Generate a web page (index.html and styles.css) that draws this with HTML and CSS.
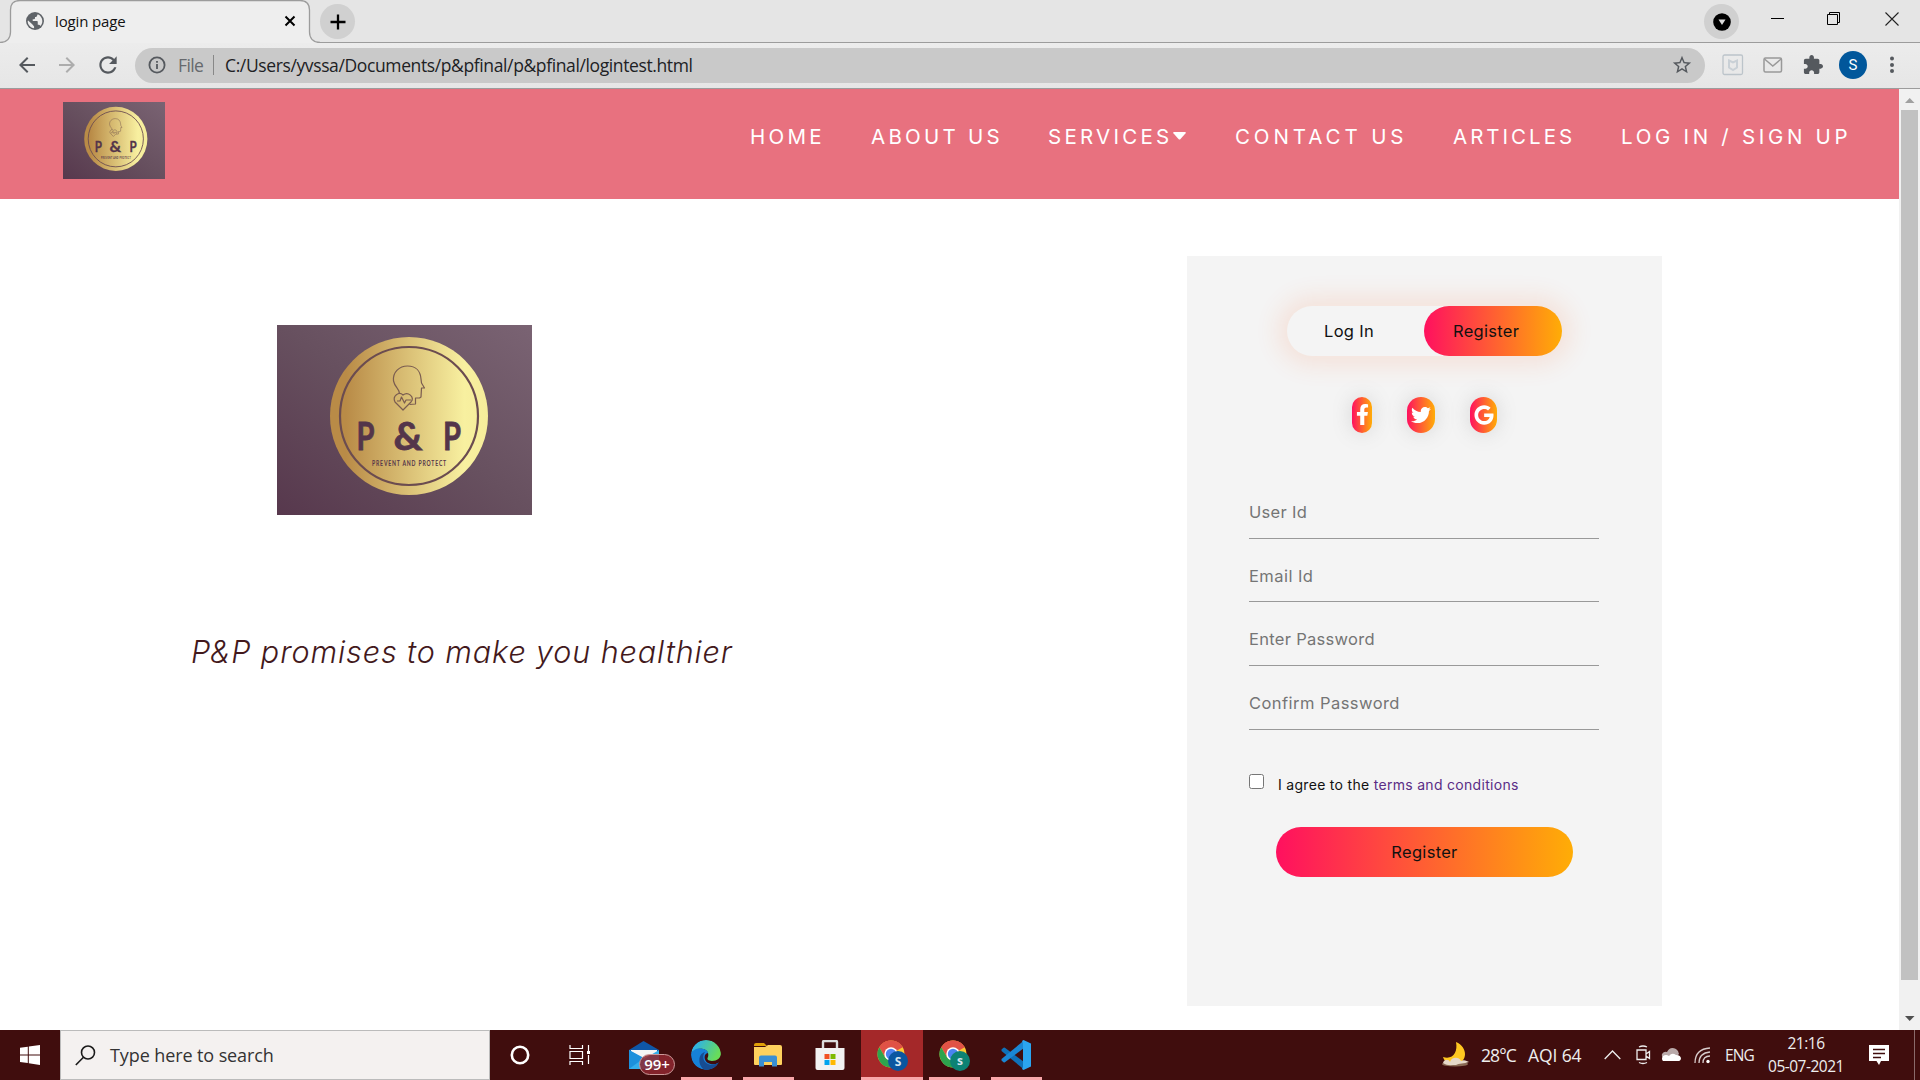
FILE: index.html
```html
<!DOCTYPE html>
<html lang="en">
<head>
<meta charset="utf-8">
<title>login page</title>
<link rel="stylesheet" href="styles.css">
</head>
<body>
<svg class="defs" width="0" height="0">
  <defs>
    <linearGradient id="plum" x1="0" y1="1" x2="1" y2="0"><stop offset="0" stop-color="#57384d"/><stop offset=".5" stop-color="#67505f"/><stop offset="1" stop-color="#7a6373"/></linearGradient>
    <linearGradient id="gold"><stop offset="0" stop-color="#b98b47"/><stop offset=".1" stop-color="#b98b47"/><stop offset=".85" stop-color="#f8f0a0"/><stop offset="1" stop-color="#f5ec9a"/></linearGradient>
    <symbol id="logo" viewBox="0 0 255 190" preserveAspectRatio="none">
      <rect width="255" height="190" fill="url(#plum)"/>
      <circle cx="132" cy="91" r="79" fill="url(#gold)"/>
      <circle cx="132" cy="91" r="69" fill="none" stroke="#6b4c50" stroke-width="2.2"/>
      <g fill="none" stroke="#7a5c50" stroke-width="1.2" stroke-linejoin="round">
        <path d="M122.500 69c.5-5-4.500-6-6-13-1-9 6-15 14-15 9 0 13 6 13.500 13l.5 4 3 5h-3l-.5 9-1.500 1h-4v6l-6 .5"/>
        <path d="M126 85l-8-8c-3-6 4-11 8-7 5-4 12 2 8 7zM120 76h3l1.500-4 3 6 1.500-3h5"/>
      </g>
      <g fill="#54354a" font-family="Lato, sans-serif" text-anchor="middle">
        <g font-size="39" font-weight="700" stroke="#54354a" stroke-width=".8">
          <text x="88.500" y="124.500" textLength="18" lengthAdjust="spacingAndGlyphs">P</text>
          <text x="131" y="124.500" textLength="29" lengthAdjust="spacingAndGlyphs">&amp;</text>
          <text x="175" y="124.500" textLength="18" lengthAdjust="spacingAndGlyphs">P</text>
        </g>
        <text x="132.500" y="140.500" font-size="7.500" font-weight="700" textLength="75" lengthAdjust="spacingAndGlyphs" letter-spacing="1.2">PREVENT AND PROTECT</text>
      </g>
    </symbol>
    <symbol id="chrome" viewBox="0 0 28 28">
      <circle cx="14" cy="14" r="13.500" fill="#fcc934"/>
      <path d="M14 14L2.300 7.250A13.500 13.500 0 0 1 25.700 7.250z" fill="#e05246"/>
      <path d="M14 7.250h11.700A13.500 13.500 0 0 0 2.300 7.250L8.200 17.400z" fill="#e05246"/>
      <path d="M2.300 7.250A13.500 13.500 0 0 0 14 27.500l5.900-10.100L14 20.700 8.200 17.400z" fill="#2da44e"/>
      <circle cx="14" cy="14" r="6.700" fill="#fff"/><circle cx="14" cy="14" r="5.200" fill="#4a84f0"/>
    </symbol>
  </defs>
</svg>

<div class="tabstrip">
  <div class="tab">
    <svg class="tab-shape" width="320" height="43"><path d="M0 42.500C7 42.500 10.500 38 10.500 32V10Q10.500.5 20 .5H300Q309.500.5 309.500 10V32C309.500 38 313 42.500 320 42.500V44H0z" fill="#eee"/><path d="M0 42.500C7 42.500 10.500 38 10.500 32V10Q10.500.5 20 .5H300Q309.500.5 309.500 10V32C309.500 38 313 42.500 320 42.500" fill="none" stroke="#9c9c9c" stroke-width="1.300"/></svg>
    <svg class="globe" width="22" height="22" viewBox="0 0 24 24"><circle cx="12" cy="12" r="9.800" fill="#5f6368"/><path d="M4.500 11.500L9 15.500l2 2.500v1.900C7 19.500 4 16 4 12zM15 4.600C17.900 5.800 20 8.600 20 12c0 2.100-.8 4-2.100 5.400-.8-1.500-1.500-1.400-2.900-1.400v-3c0-.6-.5-1-1-1H9.500v-2H11c.6 0 1-.5 1-1V7.500h1.500z" fill="#eee"/></svg>
    <span class="tab-title">login page</span>
    <svg class="tab-close" width="12" height="12" viewBox="0 0 12 12" stroke="#000" stroke-width="2"><path d="M1.500 1.500l9 9M10.500 1.500l-9 9"/></svg>
  </div>
  <div class="round new-tab"><svg width="16" height="16" stroke="#000" stroke-width="2.300"><path d="M8 .5v15M.5 8h15"/></svg></div>
  <div class="window-controls">
    <div class="round"><svg width="18" height="18"><circle cx="9" cy="9" r="8.800"/><path d="M5.500 6.500h7L9 12z" fill="#ddd"/></svg></div>
    <svg class="wc-min" width="14" height="14" stroke="#000"><path d="M0 6.500h13"/></svg>
    <svg class="wc-max" width="14" height="14" fill="none" stroke="#000"><path d="M.5 2.500h10v10H.5zM2.500 2.500v-2h10v10h-2"/></svg>
    <svg class="wc-close" width="14" height="14" stroke="#222" stroke-width="1.100"><path d="M.5.5l13 13M13.500.5l-13 13"/></svg>
  </div>
</div>

<div class="toolbar">
  <svg class="tool" width="24" height="24" viewBox="0 0 24 24" fill="#55595e"><path d="M20 11H7.830l5.590-5.590L12 4l-8 8 8 8 1.410-1.410L7.830 13H20v-2z"/></svg>
  <svg class="tool" width="24" height="24" viewBox="0 0 24 24" fill="#adadad"><path d="M4 13h12.170l-5.590 5.590L12 20l8-8-8-8-1.410 1.410L16.170 11H4v2z"/></svg>
  <svg class="tool" width="26" height="26" viewBox="0 0 24 24" fill="#55595e"><path d="M17.650 6.350C16.200 4.900 14.210 4 12 4c-4.420 0-7.990 3.580-7.990 8s3.570 8 7.990 8c3.730 0 6.840-2.550 7.730-6h-2.080c-.82 2.330-3.040 4-5.650 4-3.310 0-6-2.690-6-6s2.690-6 6-6c1.660 0 3.140.69 4.220 1.780L13 11h7V4l-2.350 2.350z"/></svg>
  <div class="omnibox">
    <svg width="18" height="18" fill="none" stroke="#55595e" stroke-width="1.800"><circle cx="9" cy="9" r="7.600"/><path d="M9 8v5M9 5v1.800"/></svg>
    <span class="scheme">File</span>
    <span class="divider"></span>
    <span class="url">C:/Users/yvssa/Documents/p&amp;pfinal/p&amp;pfinal/logintest.html</span>
    <svg class="star" width="22" height="22" viewBox="0 0 24 24" fill="#55595e"><path d="M22 9.240l-7.190-.62L12 2 9.190 8.630 2 9.240l5.460 4.730L5.820 21 12 17.270 18.180 21l-1.630-7.030L22 9.240zM12 15.400l-3.760 2.270 1-4.280-3.320-2.880 4.380-.38L12 6.100l1.710 4.040 4.380.38-3.320 2.880 1 4.280L12 15.400z"/></svg>
  </div>
  <div class="extensions">
    <svg width="22" height="22" fill="none"><rect x="1" y="1" width="19.500" height="19.500" rx="1.500" stroke="#bcc4ca" stroke-width="1.300"/><path d="M7 6.500l4 2 4-2v7l-4 2.500-4-2.500z" stroke="#c9d0d6" stroke-width="2"/></svg>
    <svg class="x-mail" width="20" height="16" fill="none" stroke="#999" stroke-width="1.500"><rect x="1" y="1" width="17.500" height="14" rx="1.500"/><path d="M1.500 2l8.300 7 8.300-7"/></svg>
    <svg class="x-puzzle" width="20" height="20" viewBox="1 1 22 22" fill="#55595e"><path d="M20.500 11H19V7c0-1.100-.9-2-2-2h-4V3.500C13 2.120 11.880 1 10.500 1S8 2.120 8 3.500V5H4c-1.100 0-1.990.9-1.990 2v3.800H3.500c1.490 0 2.700 1.210 2.700 2.700s-1.210 2.700-2.700 2.700H2V20c0 1.100.9 2 2 2h3.800v-1.500c0-1.490 1.210-2.700 2.700-2.700 1.490 0 2.700 1.210 2.700 2.700V22H17c1.100 0 2-.9 2-2v-4h1.500c1.380 0 2.500-1.120 2.500-2.500S21.880 11 20.500 11z"/></svg>
    <span class="profile">S</span>
    <svg class="x-menu" width="6" height="18" fill="#55595e"><circle cx="3" cy="2.500" r="2"/><circle cx="3" cy="9" r="2"/><circle cx="3" cy="15" r="2"/></svg>
  </div>
</div>

<div class="viewport">
  <div class="page">
    <header class="site-header">
      <svg class="brand"><use href="#logo"/></svg>
      <nav class="site-nav">
        <a class="n-home">HOME</a>
        <a class="n-about">ABOUT US</a>
        <a class="n-services">SERVICES<svg class="caret" width="13" height="8" fill="#fff"><path d="M1 0h11q1.300.3.600 1.300L7.300 7.200q-.8.700-1.600 0L.4 1.300Q-.3.300 1 0z"/></svg></a>
        <a class="n-contact">CONTACT US</a>
        <a class="n-articles">ARTICLES</a>
        <a class="n-login">LOG IN / SIGN UP</a>
      </nav>
    </header>
    <main class="content">
      <section class="intro">
        <svg class="intro-logo"><use href="#logo"/></svg>
        <p class="slogan">P&amp;P promises to make you healthier</p>
      </section>
      <section class="card">
        <div class="toggle"><span class="toggle-login">Log In</span><span class="toggle-register">Register</span></div>
        <div class="socials">
          <a class="social fb"><svg width="13" height="21" viewBox="0 0 320 512"><path d="M279.140 288l14.220-92.660h-88.910v-60.130c0-25.350 12.420-50.060 52.240-50.060h40.420V6.260S260.430 0 225.360 0c-73.220 0-121.080 44.380-121.080 124.720v70.620H22.890V288h81.390v224h100.170V288z"/></svg></a>
          <a class="social tw"><svg width="20" height="20" viewBox="0 0 512 512"><path d="M459.370 151.716c.325 4.548.325 9.097.325 13.645 0 138.720-105.583 298.558-298.558 298.558-59.452 0-114.680-17.219-161.137-47.106 8.447.974 16.568 1.299 25.340 1.299 49.055 0 94.213-16.568 130.274-44.832-46.132-.975-84.792-31.188-98.112-72.772 6.498.974 12.995 1.624 19.818 1.624 9.421 0 18.843-1.300 27.614-3.573-48.081-9.747-84.143-51.980-84.143-102.985v-1.299c13.969 7.797 30.214 12.670 47.431 13.319-28.264-18.843-46.781-51.005-46.781-87.391 0-19.492 5.197-37.360 14.294-52.954 51.655 63.675 129.300 105.258 216.365 109.807-1.624-7.797-2.599-15.918-2.599-24.040 0-57.828 46.782-104.934 104.934-104.934 30.213 0 57.502 12.670 76.670 33.137 23.715-4.548 46.456-13.320 66.599-25.340-7.798 24.366-24.366 44.833-46.132 57.827 21.117-2.273 41.584-8.122 60.426-16.243-14.292 20.791-32.161 39.308-52.628 54.253z"/></svg></a>
          <a class="social gg"><svg width="20" height="20" viewBox="0 0 488 512"><path d="M488 261.800C488 403.300 391.100 504 248 504 110.800 504 0 393.200 0 256S110.800 8 248 8c66.800 0 123 24.500 166.300 64.900l-67.500 64.900C258.500 52.600 94.300 116.600 94.300 256c0 86.500 69.100 156.600 153.700 156.600 98.200 0 135-70.400 140.800-106.900H248v-85.300h236.100c2.300 12.700 3.900 24.900 3.900 41.400z"/></svg></a>
        </div>
        <div class="fields">
          <div class="field">User Id</div>
          <div class="field f-email">Email Id</div>
          <div class="field">Enter Password</div>
          <div class="field f-confirm">Confirm Password</div>
        </div>
        <div class="agree"><span class="box"></span><span class="agree-text">I agree to the <a>terms and conditions</a></span></div>
        <div class="submit">Register</div>
      </section>
    </main>
  </div>
  <div class="scrollbar">
    <svg width="21" height="21" fill="#a0a0a0"><path d="M6 14h9.500L10.700 9z"/></svg>
    <div class="thumb"></div>
    <svg class="down" width="21" height="21" fill="#505050"><path d="M6 7h9.500l-4.800 5z"/></svg>
  </div>
</div>

<footer class="taskbar">
  <div class="start"><svg width="20" height="20" fill="#fff"><path d="M0 2.800l7.800-1.100v7.700H0zM8.800 1.500L20 0v9.400H8.800zM0 10.400h7.800v7.700L0 17zM8.800 10.400H20V20L8.800 18.300z"/></svg></div>
  <div class="search">
    <svg width="21" height="21" fill="none" stroke="#1a1a1a" stroke-width="1.600"><circle cx="13" cy="7.500" r="6.500"/><path d="M8.500 12.200L.8 20"/></svg>
    <span>Type here to search</span>
  </div>
  <div class="slot narrow"><svg width="20" height="20" fill="none" stroke="#fff" stroke-width="2.600"><circle cx="10" cy="10" r="8.200"/></svg></div>
  <div class="slot narrow"><svg width="22" height="20" fill="none" stroke="#fff" stroke-width="1.200"><path d="M1 0v3.500h12.500V0M1 20v-3.500h12.500V20M1 6.500h12.500v7H1zM19.500 0v6M19.500 10v9"/><path d="M18 6h3v3h-3z" fill="#fff" stroke="none"/></svg></div>
  <div class="slot mail">
    <svg width="32" height="30"><path d="M1 10L15.500 1 31 10v4H1z" fill="#0f57a8"/><path d="M3 10h26v9H3z" fill="#f5f5f5"/><path d="M1 10l15 9 15-9v19H1z" fill="#35aeeb"/><path d="M1 29L16 18l-15-8z" fill="#1d90dc"/></svg>
    <span class="badge">99+</span>
  </div>
  <div class="slot open">
    <svg width="30" height="30" viewBox="0 0 30 30"><defs><linearGradient id="eg" x1="0" y1="0" x2="1" y2=".4"><stop offset=".2" stop-color="#2fb2e6"/><stop offset="1" stop-color="#68dc5a"/></linearGradient><clipPath id="disc"><circle cx="15" cy="15" r="15"/></clipPath></defs><g clip-path="url(#disc)"><path d="M0 14C1 5 7 0 15 0c9 0 15 6 15 13 0 5-4 8-9 8-4-.2-5.500-2-4-4 1-3 0-7-5-8C8 8 2 10 0 14z" fill="url(#eg)"/><path d="M0 14c1-4 6-6 10-5.500 4 .3 7 2.500 7 4.500-5 1-4 8 0 10 3 1.500 7 2 10 0C23 34 0 32 0 14z" fill="#1681d8"/><path d="M14 12c-3 4-2 9 2 11.500 4 2.500 9 1 12.500-1.500C25 28 20 31 14 30 7 27 6 14 14 12z" fill="#174c92"/></g></svg>
  </div>
  <div class="slot open">
    <svg width="28" height="24"><path d="M0 2q0-2 2-2h8l3 3H0z" fill="#e0a008"/><path d="M0 4h11l3-2h12q2 0 2 2v17q0 1-1 1H1q-1 0-1-1z" fill="#fed15e"/><path d="M5 23.500v-9q0-2 2-2h14q2 0 2 2v9h-5V19h-8v4.500z" fill="#3a8fd4"/></svg>
  </div>
  <div class="slot"><svg width="30" height="30"><path d="M8 9V2q0-1 1-1h12q1 0 1 1v7" fill="none" stroke="#ddd" stroke-width="2.400"/><path d="M.5 8h29v20q0 2-2 2h-25q-2 0-2-2z" fill="#f2f2f2"/><path d="M9.500 14h5v5h-5z" fill="#f25022"/><path d="M15.500 14h5v5h-5z" fill="#7fba00"/><path d="M9.500 20h5v5h-5z" fill="#00a4ef"/><path d="M15.500 20h5v5h-5z" fill="#ffb900"/></svg></div>
  <div class="slot open active"><svg width="34" height="32"><use href="#chrome" width="28" height="28" x="2" y="1"/><circle cx="23" cy="22" r="10" fill="#0b56a0"/><text class="user" x="23" y="26.500">S</text></svg></div>
  <div class="slot open"><svg width="34" height="32"><use href="#chrome" width="28" height="28" x="2" y="1"/><circle cx="23" cy="22" r="10" fill="#0d8274"/><text class="user" x="23" y="26">s</text></svg></div>
  <div class="slot open"><svg width="30" height="30"><path d="M.5 9.500l2-1.800q.7-.4 1.400 0L23 22v7.500L.5 11z" fill="#0f71b8"/><path d="M.5 20.500l2 1.800q.7.400 1.400 0L23 8V.5L.5 19z" fill="#1a87d4"/><path d="M22.500 0L30 3.500v23L22.500 30 21 29l1-2V3l-1-2z" fill="#2ba5ef"/></svg></div>

  <div class="tray">
    <div class="weather">
      <svg width="30" height="26"><ellipse cx="14" cy="22" rx="13" ry="2.600" fill="#8a6a55"/><path d="M15 0c12 5 12 20 0 22C8 23 3 19 2 15c10 3 15-5 13-15z" fill="#ffc820"/><path d="M2 21c1-4 6-4 7-1 1-5 9-6 11-1 3-2 6 0 8 1-5 2-10 1-13 3-5 0-9 1-13-2z" fill="#e6d8c8"/></svg>
      <span class="temp">28°C</span><span class="aqi">AQI 64</span>
    </div>
    <svg class="t-chevron" width="17" height="10" fill="none" stroke="#eee" stroke-width="1.300"><path d="M.7 9l7.800-8 7.800 8"/></svg>
    <svg class="t-meet" width="16" height="20" fill="none" stroke="#eee" stroke-width="1.300"><path d="M1 5h9v9.500H1zM10 9l3.500-2.500v7L10 11M3 2q4-2 8 0M3 17.500q4 2 8 0"/></svg>
    <svg class="t-cloud" width="21" height="14"><path d="M5 11q-5-1-4-5 2-3 5-2 3-6 9-3 3 2 3 5l-5 5z" fill="#b9a9a9"/><path d="M2 13q-2-2 0-5 3-2 6 0 3-4 7-1 5 0 5 4-1 2-2 2z" fill="#fff"/></svg>
    <svg class="t-wifi" width="17" height="17" fill="none" stroke="#d8cccc" stroke-width="1.300"><path d="M1 16Q1 2 16 1M5 16Q5 6 16 5M9 16q0-7 7-7"/><circle cx="14" cy="14.500" r="1.700" fill="#fff" stroke="none"/></svg>
    <span class="lang">ENG</span>
    <div class="clock"><span class="time">21:16</span><span class="date">05-07-2021</span></div>
    <svg class="t-note" width="20" height="20"><path d="M0 0h20v16h-8l-2 4-2.500-4H0z" fill="#fff"/><path d="M4 4.500h12M4 8.500h12M4 12.500h8" stroke="#400d0d" stroke-width="1.300"/></svg>
  </div>
</footer>
</body>
</html>
```
FILE: styles.css
```css
* { box-sizing: border-box; }
body { margin: 0; width: 1920px; height: 1080px; overflow: hidden; display: flex; flex-direction: column; font-family: "Open Sans", sans-serif; background: #fff; }
svg { display: block; flex: none; }
.defs { position: absolute; }
span, a { white-space: nowrap; }

/* browser frame */
.tabstrip { height: 43px; flex: none; display: flex; align-items: flex-start; background: #e5e5e5; border-bottom: 1px solid #9c9c9c; }
.tab { position: relative; width: 320px; height: 43px; flex: none; display: flex; align-items: center; padding: 0 24px 2px 24px; }
.tab-shape { position: absolute; left: 0; top: 0; }
.globe, .tab-title, .tab-close { position: relative; }
.tab-title { margin-left: 9px; font-size: 15px; letter-spacing: -.15px; color: #111; flex: 1; }
.round { width: 35px; height: 35px; border-radius: 50%; background: #d0d0d0; display: flex; align-items: center; justify-content: center; flex: none; }
.new-tab { margin-top: 4px; }
.window-controls { margin-left: auto; display: flex; padding: 4px 21px 0 0; }
.wc-min { margin: 8px 0 0 32px; }
.wc-max { margin: 8px 0 0 42px; }
.wc-close { margin: 8px 0 0 44px; }

.toolbar { height: 46px; flex: none; display: flex; align-items: center; background: linear-gradient(#ececec, #e6e6e6); border-bottom: 1px solid #9c9c9c; padding: 0 24px 1px 15px; }
.tool + .tool { margin-left: 16px; }
.omnibox { width: 1570px; height: 35px; margin-left: 14px; border-radius: 18px; background: #c9c9c9; display: flex; align-items: center; padding: 0 12px 0 13px; font-size: 17.500px; }
.scheme { margin-left: 12px; width: 27px; color: #66696d; letter-spacing: -.6px; }
.divider { width: 1px; height: 20px; background: #888; margin: 0 11px 0 8px; }
.url { color: #202124; letter-spacing: -.38px; flex: 1; }
.extensions { flex: 1; display: flex; align-items: center; padding-left: 17px; }
.x-mail { margin-left: 19px; }
.x-puzzle { margin-left: 20px; }
.profile { margin-left: 16px; width: 28px; height: 28px; border-radius: 50%; background: #01579b; color: #fff; font: 15px/28px Roboto, sans-serif; text-align: center; }
.x-menu { margin-left: 22px; }

/* page */
.viewport { flex: 1; display: flex; min-height: 0; }
.page { flex: 1; font-family: Inter, sans-serif; }
.site-header { height: 110px; background: #e8717f; display: flex; justify-content: space-between; padding: 13px 48px 0 63px; }
.brand { width: 102px; height: 77px; }
.site-nav { display: grid; grid-template-columns: 121px 177px 187px 218px 168px 230px; margin-top: 22px; color: #fff; font-size: 20.500px; line-height: 26px; letter-spacing: 3px; }
.n-home { letter-spacing: 3.300px; }
.n-about, .n-services { letter-spacing: 3.250px; }
.n-contact { letter-spacing: 3.900px; }
.n-login { letter-spacing: 3.700px; }
.caret { display: inline-block; margin-left: 1px; vertical-align: 4px; }
.content { display: flex; justify-content: space-between; padding: 57px 237px 0 192px; }
.intro { display: flex; flex-direction: column; padding-top: 69px; }
.intro-logo { width: 255px; height: 190px; margin-left: 85px; }
.slogan { margin: 117px 0 0 -1px; font-size: 30.500px; line-height: 40px; font-style: oblique; font-weight: 300; color: #43191c; white-space: nowrap; letter-spacing: .9px; }

.card { width: 475px; height: 750px; background: #f4f4f4; padding: 50px 62px 0; display: flex; flex-direction: column; font-size: 16.500px; letter-spacing: .3px; color: #111; }
.toggle { width: 275px; height: 50px; align-self: center; border-radius: 25px; box-shadow: 0 0 24px 9px #ff61241f; display: flex; line-height: 50px; }
.toggle-login { width: 137px; padding-left: 37px; }
.toggle-register { width: 138px; padding-left: 29px; border-radius: 25px; }
.toggle-register, .social, .submit { background: linear-gradient(to right, #ff105f, #ffad06); }
.socials { display: flex; align-self: center; gap: 35px; margin-top: 41px; }
.social { height: 36px; border-radius: 14px; box-shadow: 0 0 20px 0 #7f7f7f3d; display: flex; align-items: center; justify-content: center; fill: #fff; padding-bottom: 1px; }
.fb { width: 20px; border-radius: 10px; }
.tw { width: 28px; }
.gg { width: 27px; }
.fields { display: flex; flex-direction: column; margin-top: 42px; width: 350px; }
.field { height: 64px; line-height: 20px; padding-top: 27px; border-bottom: 1px solid #999; color: #757575; }
.f-email { height: 63px; letter-spacing: .450px; }
.f-confirm { letter-spacing: .450px; }
.agree { display: flex; margin-top: 44px; font-size: 14px; line-height: 20px; }
.box { width: 15px; height: 15px; border: 1px solid #767676; border-radius: 2.500px; background: #fff; }
.agree-text { margin: 1px 0 0 14px; }
.agree-text a { color: #5a2d86; }
.submit { width: 297px; height: 50px; align-self: center; border-radius: 25px; margin-top: 32px; line-height: 50px; text-align: center; }

.scrollbar { width: 21px; background: #f1f1f1; display: flex; flex-direction: column; }
.thumb { width: 17px; height: 870px; margin-left: 2px; background: #c1c1c1; }
.down { margin-top: auto; }

/* taskbar */
.taskbar { height: 50px; flex: none; display: flex; background: #400d0d; color: #eee; }
.start { width: 60px; display: flex; align-items: center; justify-content: center; }
.search { width: 430px; height: 50px; background: #f4f1f0; border: 1px solid #bbb; display: flex; align-items: center; padding-left: 14px; gap: 14px; color: #333; font-size: 18px; letter-spacing: -.1px; }
.slot { width: 62px; position: relative; display: flex; align-items: center; justify-content: center; flex: none; }
.narrow { width: 60px; }
.mail { margin-left: 3px; }
.badge { position: absolute; left: 26px; top: 24px; width: 36px; height: 21px; border: 1px solid #c99; border-radius: 11px; background: #8c2730e0; color: #fff; font-size: 15px; font-weight: 600; line-height: 19px; text-align: center; }
.open::after { content: ""; position: absolute; left: 6px; right: 5px; bottom: 0; height: 3px; background: #f9a7aa; }
.active { background: #a42829; }
.active::after { left: 0; right: 0; }
.user { font: 700 12px "Open Sans", sans-serif; fill: #d5e3ee; text-anchor: middle; }
.tray { margin-left: auto; width: 480px; display: flex; align-items: center; border-right: 1px solid #8a6a6a; margin-right: 5px; font-size: 17.500px; }
.weather { width: 168px; display: flex; align-items: center; padding-left: 6px; }
.temp { margin-left: 10px; width: 47px; letter-spacing: -.9px; }
.aqi { letter-spacing: -.1px; }
.t-chevron { margin-left: 1px; }
.t-meet { margin-left: 15px; }
.t-cloud { margin-left: 9px; }
.t-wifi { margin-left: 12px; }
.lang { margin-left: 14px; width: 30px; font-size: 15.500px; letter-spacing: -.9px; }
.clock { width: 102px; display: flex; flex-direction: column; align-items: center; font-size: 15.500px; line-height: 23px; letter-spacing: -.5px; }
.t-note { margin-left: 12px; }
```
